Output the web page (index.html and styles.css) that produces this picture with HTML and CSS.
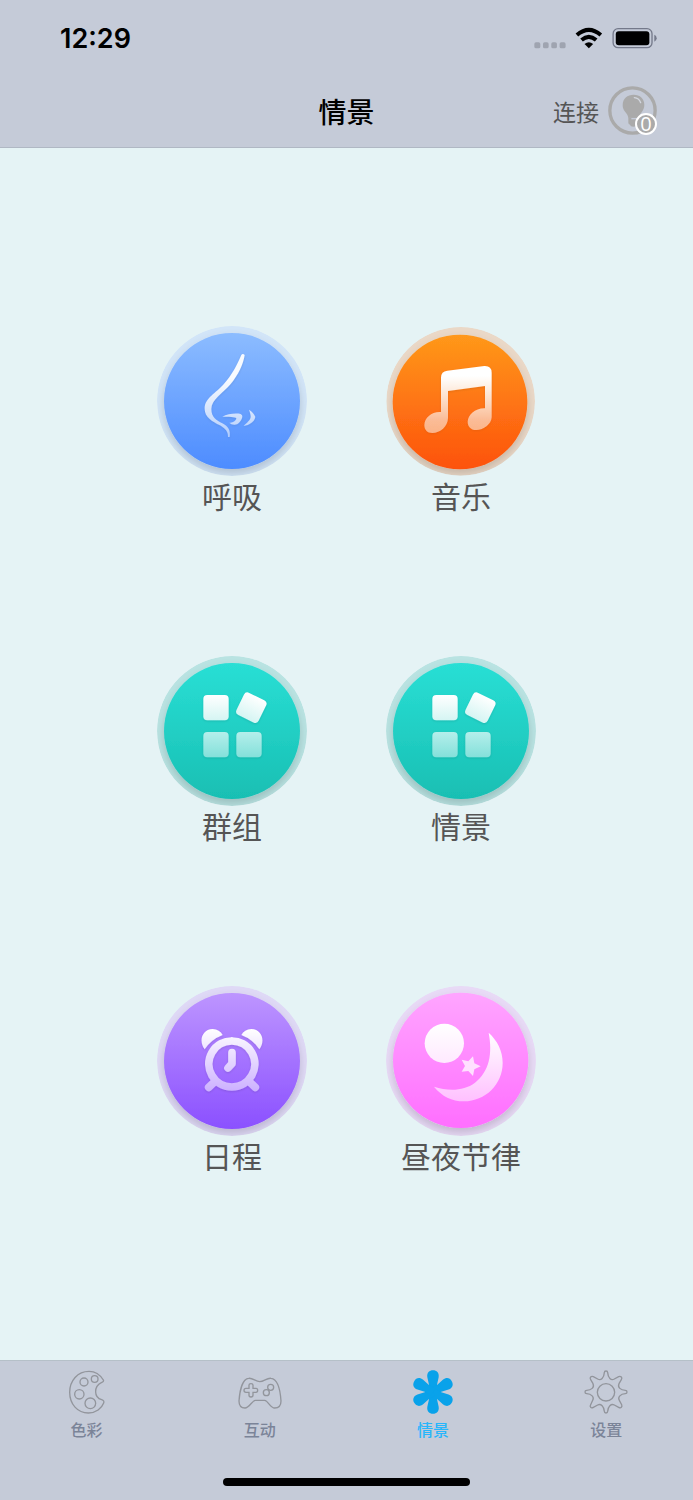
FILE: index.html
```html
<!DOCTYPE html>
<html lang="zh-CN">

<head>
    <meta charset="UTF-8" />
    <meta name="viewport" content="width=device-width, initial-scale=1.0" />
    <title>情景</title>
    <link rel="stylesheet" href="styles.css">
</head>

<body>
    <header class="header">
        <div class="status-bar">
            <span class="time">12:29</span>
            <svg class="status-icons" viewBox="41 50 370 66" aria-hidden="true">
                <g fill="#9fa4b0">
                    <rect x="42" y="96" width="18" height="18" rx="5" />
                    <rect x="68" y="96" width="17" height="18" rx="5" />
                    <rect x="93" y="96" width="17" height="18" rx="5" />
                    <rect x="118" y="96" width="18" height="18" rx="5" />
                </g>
                <!-- wifi -->
                <path d="M170 74Q206 43 242 74M184 89Q206 70 228 89" fill="none" stroke="#000" stroke-width="12" />
                <path d="M193 101Q206 91 219 101L206 114Z" />
                <!-- 电池 -->
                <rect x="279" y="55" width="117" height="57" rx="15" fill="none" stroke="#74798a" stroke-width="4" />
                <rect x="287" y="63" width="101" height="42" rx="9" />
                <path d="M403 73Q410 76 410 83.500Q410 91 403 94Z" fill="#74798a" />
            </svg>
        </div>
        <div class="nav-bar">
            <h1>情景</h1>
            <button class="connect" type="button">
                <span>连接</span>
                <span class="lamp">
                    <svg viewBox="264 228 147 147" aria-hidden="true">
                        <circle cx="337.500" cy="301.500" r="68" fill="none" stroke="#aaa" stroke-width="10" />
                        <path d="M308 286C308 265 322 254 341 254C360 254 373 266 373 284C373 303 360 307 357 323H325C322 307 308 304 308 286Z" fill="#aaa" />
                        <path d="M325 322H357V338Q357 343 352 344Q350 350 340 350Q331 350 330 344Q325 343 325 338Z" fill="#aaa" />
                        <path d="M343 263Q357 264 362 278" fill="none" stroke="#d3d7df" stroke-width="4" stroke-linecap="round" />
                        <path d="M334 326H358" stroke="#c5cbd8" stroke-width="4" />
                    </svg>
                    <span class="badge">0</span>
                </span>
            </button>
        </div>
    </header>

    <main class="scenes">
        <button class="scene" type="button">
            <svg class="scene-icon" viewBox="35 33 450 450" aria-hidden="true">
                <defs>
                    <linearGradient id="blue" x2="0" y2="1">
                        <stop stop-color="#8cbcff" />
                        <stop offset="1" stop-color="#4d8cff" />
                    </linearGradient>
                    <linearGradient id="nose" gradientUnits="userSpaceOnUse" x1="0" y1="116" x2="0" y2="366">
                        <stop offset=".3" stop-color="#fff" stop-opacity=".95" />
                        <stop offset=".75" stop-color="#fff" stop-opacity=".68" />
                        <stop offset="1" stop-color="#fff" stop-opacity=".5" />
                    </linearGradient>
                    <!-- 圆形底部的阴影，所有图标共用 -->
                    <filter id="shadow" x="-20%" y="-20%" width="140%" height="140%">
                        <feDropShadow dx="0" dy="14" stdDeviation="13" flood-color="#000" flood-opacity=".16" />
                    </filter>
                    <filter id="soft" x="-20%" y="-20%" width="140%" height="140%">
                        <feDropShadow dx="0" dy="3" stdDeviation="3" flood-color="#000" flood-opacity=".12" />
                    </filter>
                    <clipPath id="round">
                        <circle cx="260" cy="258" r="225" />
                    </clipPath>
                </defs>
                <g clip-path="url(#round)">
                    <circle cx="260" cy="258" r="225" fill="#d2e5f8" />
                    <circle cx="260" cy="258" r="204" fill="url(#blue)" filter="url(#shadow)" />
                </g>
                <g fill="url(#nose)" filter="url(#soft)">
                    <path d="M288 120Q292 114 298 120C294 148 278 181 256 207C234 233 198 254 198 282C198 308 214 316 231 325C249 334 256 347 253 366H248C249 350 240 341 224 331C201 319 178 307 178 281C178 249 213 234 235 208C260 180 275 150 288 120Z" />
                    <path d="M231 305C246 296 273 294 286 297Q292 300 291 305C288 319 276 330 267 329Q257 329 252 323C262 325 273 316 273 310C270 304 252 307 231 305Z" />
                    <path d="M311 284C320 289 327 297 330 306C327 321 312 330 295 333C304 324 315 316 316 307Q317 300 311 284Z" />
                </g>
            </svg>
            <span>呼吸</span>
        </button>

        <button class="scene" type="button">
            <svg class="scene-icon" viewBox="33 33 450 450" aria-hidden="true">
                <defs>
                    <linearGradient id="orange" x2="0" y2="1">
                        <stop stop-color="#ff981a" />
                        <stop offset="1" stop-color="#fd520d" />
                    </linearGradient>
                    <linearGradient id="note" gradientUnits="userSpaceOnUse" x1="0" y1="153" x2="0" y2="354">
                        <stop offset=".15" stop-color="#fff" />
                        <stop offset=".8" stop-color="#fff" stop-opacity=".54" />
                        <stop offset="1" stop-color="#fff" stop-opacity=".5" />
                    </linearGradient>
                    <clipPath id="round-music">
                        <circle cx="257" cy="259" r="223" />
                    </clipPath>
                </defs>
                <g clip-path="url(#round-music)">
                    <circle cx="257" cy="259" r="223" fill="#ead8c7" />
                    <circle cx="255" cy="261" r="202" fill="url(#orange)" filter="url(#shadow)" />
                </g>
                <path d="M198 291V188Q198 169 217 167L328 153Q350 152 350 173V307C349 328 325 345 304 345C286 345 278 333 278 320C279 300 300 279 330 280V213L219 228V309C218 335 196 354 172 354C156 354 148 344 148 330C149 308 170 289 198 291Z" fill="url(#note)" filter="url(#soft)" />
            </svg>
            <span>音乐</span>
        </button>

        <button class="scene" type="button">
            <svg class="scene-icon" viewBox="35 33 450 450" aria-hidden="true">
                <defs>
                    <linearGradient id="teal" x2="0" y2="1">
                        <stop stop-color="#29dfd5" />
                        <stop offset="1" stop-color="#19bfb3" />
                    </linearGradient>
                    <linearGradient id="tile" x2="0" y2="1">
                        <stop stop-color="#fff" />
                        <stop offset="1" stop-color="#d5f5f3" />
                    </linearGradient>
                    <linearGradient id="tile-dim" x2="0" y2="1">
                        <stop stop-color="#b4efeb" />
                        <stop offset="1" stop-color="#84e0da" />
                    </linearGradient>
                </defs>
                <g clip-path="url(#round)">
                    <circle cx="260" cy="258" r="225" fill="#b9e3e2" />
                    <circle cx="260" cy="258" r="204" fill="url(#teal)" filter="url(#shadow)" />
                </g>
                <g id="tiles" filter="url(#soft)">
                    <rect x="174" y="150" width="76" height="76" rx="12" fill="url(#tile)" />
                    <rect x="281" y="151" width="74" height="74" rx="12" fill="url(#tile)" transform="rotate(26 318 188)" />
                    <rect x="174" y="261" width="76" height="76" rx="12" fill="url(#tile-dim)" />
                    <rect x="273" y="261" width="76" height="76" rx="12" fill="url(#tile-dim)" />
                </g>
            </svg>
            <span>群组</span>
        </button>

        <button class="scene" type="button">
            <svg class="scene-icon" viewBox="35 33 450 450" aria-hidden="true">
                <g clip-path="url(#round)">
                    <circle cx="260" cy="258" r="225" fill="#b9e3e2" />
                    <circle cx="260" cy="258" r="204" fill="url(#teal)" filter="url(#shadow)" />
                </g>
                <use href="#tiles" />
            </svg>
            <span>情景</span>
        </button>

        <button class="scene" type="button">
            <svg class="scene-icon" viewBox="35 36 450 450" aria-hidden="true">
                <defs>
                    <linearGradient id="purple" x2="0" y2="1">
                        <stop stop-color="#bd95ff" />
                        <stop offset="1" stop-color="#8b50ff" />
                    </linearGradient>
                    <linearGradient id="clock" gradientUnits="userSpaceOnUse" x1="0" y1="165" x2="0" y2="352">
                        <stop stop-color="#fff" />
                        <stop offset="1" stop-color="#ccb0ff" />
                    </linearGradient>
                    <clipPath id="round-clock">
                        <circle cx="260" cy="261" r="225" />
                    </clipPath>
                </defs>
                <g clip-path="url(#round-clock)">
                    <circle cx="260" cy="261" r="225" fill="#dfd9f6" />
                    <circle cx="260" cy="261" r="204" fill="url(#purple)" filter="url(#shadow)" />
                </g>
                <g filter="url(#soft)">
                    <path d="M178 226C160 204 168 166 202 165Q223 166 232 183Q198 196 178 226ZM342 226C360 204 352 166 318 165Q297 166 288 183Q322 196 342 226Z" fill="url(#clock)" />
                    <g fill="none" stroke="url(#clock)" stroke-linecap="round" stroke-linejoin="round">
                        <path d="M260 201A69 69 0 1 1 259 201M205 326L190 340M315 326L330 340" stroke-width="23" />
                        <path d="M260 236V269L248 282" stroke-width="23" />
                    </g>
                </g>
            </svg>
            <span>日程</span>
        </button>

        <button class="scene" type="button">
            <svg class="scene-icon" viewBox="33 36 450 450" aria-hidden="true">
                <defs>
                    <linearGradient id="pink" x2="0" y2="1">
                        <stop stop-color="#ffa5ff" />
                        <stop offset="1" stop-color="#ff6eff" />
                    </linearGradient>
                    <linearGradient id="sun" x2="0" y2="1">
                        <stop stop-color="#fff" />
                        <stop offset="1" stop-color="#ffe9ff" />
                    </linearGradient>
                    <linearGradient id="moon" x2="0" y2="1">
                        <stop stop-color="#fff" />
                        <stop offset="1" stop-color="#ffc0ff" />
                    </linearGradient>
                    <clipPath id="round-day">
                        <circle cx="258" cy="261" r="225" />
                    </clipPath>
                </defs>
                <g clip-path="url(#round-day)">
                    <circle cx="258" cy="261" r="225" fill="#e8daf6" />
                    <circle cx="257" cy="259" r="203" fill="url(#pink)" filter="url(#shadow)" />
                </g>
                <circle cx="208" cy="208" r="59" fill="url(#sun)" />
                <path d="M341 176C367 200 383 230 383 267C383 331 331 382 267 382C230 382 201 367 177 338C220 352 267 351 300 326C343 292 353 239 341 176Z" fill="url(#moon)" />
                <path d="M294 247L298 268L317 277L298 286L294 306L280 291L260 293L270 276L260 257L280 262Z" fill="#ffe0ff" />
            </svg>
            <span>昼夜节律</span>
        </button>
    </main>

    <footer class="tab-bar">
        <nav class="tabs">
            <a class="tab" href="#color">
                <svg viewBox="74 58 132 132" aria-hidden="true">
                    <path d="M189 88C178 70 164 62 146 62C112 62 88 90 88 125C88 161 112 187 144 187C167 187 184 173 190 157Q193 150 184 147C160 141 160 107 183 96Q192 92 189 88Z" />
                    <circle cx="131" cy="94" r="12" />
                    <circle cx="163" cy="85" r="10" />
                    <circle cx="117" cy="131" r="14" />
                    <circle cx="150" cy="158" r="16" />
                </svg>
                <span>色彩</span>
            </a>
            <a class="tab" href="#interact">
                <svg viewBox="595 58 132 132" aria-hidden="true">
                    <path d="M627 83C639 81 648 93 660 93C673 93 682 81 694 83C714 85 722 121 724 151C724 166 716 172 705 172C692 172 685 150 675 149H647C637 150 629 172 616 172C605 172 598 166 598 151C600 121 608 85 627 83Z" />
                    <path d="M628 103Q628 99 634 99Q640 99 640 103V113H649Q654 113 654 119Q654 125 649 125H640V134Q640 139 634 139Q628 139 628 134V125H619Q613 125 613 119Q613 113 619 113H628Z" />
                    <circle cx="693" cy="110" r="9" />
                    <circle cx="680" cy="126" r="9" />
                </svg>
                <span>互动</span>
            </a>
            <a class="tab active" href="#scene" aria-current="page">
                <svg viewBox="64 62 132 132" aria-hidden="true">
                    <g id="petals">
                        <path id="petal" d="M118 128L118 106L113 84C111 70 119 63 130 63C141 63 149 70 147 84L142 106L142 128Z" />
                        <use href="#petal" transform="rotate(60 130 128)" />
                        <use href="#petal" transform="rotate(120 130 128)" />
                    </g>
                    <use href="#petals" transform="rotate(180 130 128)" />
                </svg>
                <span>情景</span>
            </a>
            <a class="tab" href="#settings">
                <svg viewBox="584 59 132 132" aria-hidden="true">
                    <path d="M645 67Q645 62 650 62Q655 62 655 67C656 82 665 92 675 86L688 79Q693 77 696 80Q699 83 696 88L689 100C684 111 694 120 708 120Q713 120 713 125Q713 130 708 130C694 131 684 140 690 150L697 163Q699 168 696 171Q693 174 688 171L675 164C665 159 656 169 655 183Q655 188 650 188Q645 188 645 183C644 169 635 159 625 164L612 171Q607 174 604 171Q601 168 604 163L610 150C616 140 606 131 592 130Q587 130 587 125Q587 120 592 120C606 120 616 111 611 100L604 88Q601 83 604 80Q607 77 612 79L625 86C635 92 644 82 645 67Z" />
                    <circle cx="650" cy="126" r="26" />
                </svg>
                <span>设置</span>
            </a>
        </nav>
        <div class="home-indicator"></div>
    </footer>
</body>

</html>
```
FILE: styles.css
```css
* {
    box-sizing: border-box;
}

body {
    margin: 0;
    min-height: 100vh;
    display: flex;
    flex-direction: column;
    background: #e5f3f5;
    font-family: "Noto Sans CJK SC", sans-serif;
}

button {
    padding: 0;
    border: none;
    background: none;
    font-family: inherit;
    cursor: pointer;
}

svg {
    display: block;
}

/* 顶部 */
.header {
    background: #c5cbd8;
    border-bottom: 1px solid #b0b8c4;
}

.status-bar {
    height: 76px;
    padding: 0 36px 0 60px;
    display: flex;
    align-items: center;
    justify-content: space-between;
}

.time {
    font-family: Inter, sans-serif;
    font-size: 27px;
    font-weight: 600;
}

.status-icons {
    width: 123px;
    height: 22px;
}

.nav-bar {
    height: 71px;
    padding: 0 36px 2px;
    display: grid;
    grid-template-columns: 1fr auto 1fr;
    align-items: center;
}

.nav-bar h1 {
    grid-column: 2;
    margin: 0;
    font-size: 28px;
    line-height: 40px;
    font-weight: 500;
}

.connect {
    justify-self: end;
    display: flex;
    align-items: center;
    gap: 9px;
    font-size: 23px;
    line-height: 32px;
    color: #555;
}

.lamp {
    position: relative;
}

.lamp svg {
    width: 49px;
    height: 49px;
}

.badge {
    position: absolute;
    right: 0;
    bottom: 0;
    width: 22px;
    height: 22px;
    border: 2px solid #fff;
    border-radius: 50%;
    background: #aaa;
    color: #fff;
    font-family: "Open Sans", sans-serif;
    font-size: 20px;
    line-height: 18px;
    text-align: center;
}

/* 情景列表 */
.scenes {
    flex: 1;
    padding-bottom: 8px;
    display: grid;
    grid-template-columns: 150px 150px;
    gap: 142px 79px;
    justify-content: center;
    align-content: center;
}

.scene {
    display: flex;
    flex-direction: column;
    align-items: center;
    font-size: 30px;
    line-height: 38px;
    color: #555;
}

.scene-icon {
    width: 150px;
    height: 150px;
}

/* 底部标签栏 */
.tab-bar {
    height: 140px;
    padding: 9px 0 14px;
    display: flex;
    flex-direction: column;
    justify-content: space-between;
    align-items: center;
    background: #c5cbd8;
    border-top: 1px solid #b5c0c8;
}

.tabs {
    width: 100%;
    display: grid;
    grid-template-columns: repeat(4, 1fr);
}

.tab {
    display: flex;
    flex-direction: column;
    align-items: center;
    gap: 4px;
    color: #7b8498;
    font-size: 16px;
    font-weight: 500;
    line-height: 22px;
    text-decoration: none;
}

.tab svg {
    width: 44px;
    height: 44px;
    fill: none;
    stroke: #92959c;
    stroke-width: 4;
}

.tab.active {
    color: #27b6fb;
}

.tab.active svg {
    fill: #09a2ea;
    stroke: none;
}

.home-indicator {
    width: 247px;
    height: 8px;
    border-radius: 4px;
    background: #000;
}
```
